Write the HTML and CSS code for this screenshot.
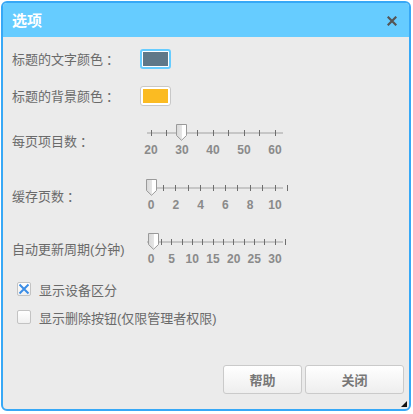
FILE: index.html
```html
<!DOCTYPE html>
<html lang="zh-CN">
<head>
<meta charset="utf-8">
<title>选项</title>
<link rel="stylesheet" href="styles.css">
</head>
<body>
<div class="dialog">
  <div class="header">
    <span class="title">选项</span>
    <span class="close"><svg width="10" height="10" viewBox="0 0 10 10"><path d="M1.5 1.5 L8.5 8.5 M8.5 1.5 L1.5 8.5" stroke="#555" stroke-width="2.2" stroke-linecap="square"/></svg></span>
  </div>
  <div class="content">
    <div class="row row-color r1">
      <span class="label">标题的文字颜色<span class="colon">：</span></span>
      <span class="swatch swatch-focus"><span class="fill fill-slate"></span></span>
    </div>
    <div class="row row-color r2">
      <span class="label">标题的背景颜色<span class="colon">：</span></span>
      <span class="swatch"><span class="fill fill-amber"></span></span>
    </div>

    <div class="row row-slider r3">
      <span class="label">每页项目数<span class="colon">：</span></span>
      <div class="slider">
        <div class="track"></div>
        <i class="tick" style="left:5px"></i><i class="tick" style="left:20.5px"></i><i class="tick" style="left:36px"></i><i class="tick" style="left:51.5px"></i><i class="tick" style="left:67px"></i><i class="tick" style="left:82.5px"></i><i class="tick" style="left:98px"></i><i class="tick" style="left:113.5px"></i><i class="tick" style="left:129px"></i>
        <svg class="thumb" style="left:30px" width="11" height="17" viewBox="0 0 11 17"><defs><linearGradient id="g1" x1="0" x2="1" y1="0" y2="0"><stop offset="0" stop-color="#d9d9d9"/><stop offset="0.55" stop-color="#e6e6e6"/><stop offset="0.6" stop-color="#ffffff"/><stop offset="1" stop-color="#ffffff"/></linearGradient></defs><polygon points="0.5,0.5 10.5,0.5 10.5,11.5 5.5,16.3 0.5,11.5" fill="url(#g1)" stroke="#9a9a9a"/></svg>
        <span class="num" style="left:5px">20</span><span class="num" style="left:36px">30</span><span class="num" style="left:67px">40</span><span class="num" style="left:98px">50</span><span class="num" style="left:129px">60</span>
      </div>
    </div>

    <div class="row row-slider r4">
      <span class="label">缓存页数<span class="colon">：</span></span>
      <div class="slider">
        <div class="track"></div>
        <i class="tick" style="left:5px"></i><i class="tick" style="left:17.4px"></i><i class="tick" style="left:29.8px"></i><i class="tick" style="left:42.2px"></i><i class="tick" style="left:54.6px"></i><i class="tick" style="left:67px"></i><i class="tick" style="left:79.4px"></i><i class="tick" style="left:91.8px"></i><i class="tick" style="left:104.2px"></i><i class="tick" style="left:116.6px"></i><i class="tick" style="left:129px"></i><i class="tick" style="left:141px"></i>
        <svg class="thumb" style="left:0px" width="11" height="17" viewBox="0 0 11 17"><defs><linearGradient id="g2" x1="0" x2="1" y1="0" y2="0"><stop offset="0" stop-color="#d9d9d9"/><stop offset="0.55" stop-color="#e6e6e6"/><stop offset="0.6" stop-color="#ffffff"/><stop offset="1" stop-color="#ffffff"/></linearGradient></defs><polygon points="0.5,0.5 10.5,0.5 10.5,11.5 5.5,16.3 0.5,11.5" fill="url(#g2)" stroke="#9a9a9a"/></svg>
        <span class="num" style="left:5px">0</span><span class="num" style="left:29.8px">2</span><span class="num" style="left:54.6px">4</span><span class="num" style="left:79.4px">6</span><span class="num" style="left:104.2px">8</span><span class="num" style="left:129px">10</span>
      </div>
    </div>

    <div class="row row-slider r5">
      <span class="label">自动更新周期(分钟)</span>
      <div class="slider">
        <div class="track"></div>
        <i class="tick" style="left:5px"></i><i class="tick" style="left:15.3px"></i><i class="tick" style="left:25.7px"></i><i class="tick" style="left:36px"></i><i class="tick" style="left:46.3px"></i><i class="tick" style="left:56.7px"></i><i class="tick" style="left:67px"></i><i class="tick" style="left:77.3px"></i><i class="tick" style="left:87.7px"></i><i class="tick" style="left:98px"></i><i class="tick" style="left:108.3px"></i><i class="tick" style="left:118.7px"></i><i class="tick" style="left:129px"></i><i class="tick" style="left:139px"></i>
        <svg class="thumb" style="left:2px" width="11" height="17" viewBox="0 0 11 17"><defs><linearGradient id="g3" x1="0" x2="1" y1="0" y2="0"><stop offset="0" stop-color="#d9d9d9"/><stop offset="0.55" stop-color="#e6e6e6"/><stop offset="0.6" stop-color="#ffffff"/><stop offset="1" stop-color="#ffffff"/></linearGradient></defs><polygon points="0.5,0.5 10.5,0.5 10.5,11.5 5.5,16.3 0.5,11.5" fill="url(#g3)" stroke="#9a9a9a"/></svg>
        <span class="num" style="left:5px">0</span><span class="num" style="left:25.7px">5</span><span class="num" style="left:46.3px">10</span><span class="num" style="left:67px">15</span><span class="num" style="left:87.7px">20</span><span class="num" style="left:108.3px">25</span><span class="num" style="left:129px">30</span>
      </div>
    </div>

    <label class="check c1">
      <span class="box"><svg width="12" height="12" viewBox="0 0 12 12"><path d="M1.5 1.5 L10.5 10.5 M10.5 1.5 L1.5 10.5" stroke="#3b8de6" stroke-width="2"/></svg></span>
      <span class="check-text">显示设备区分</span>
    </label>
    <label class="check c2">
      <span class="box"></span>
      <span class="check-text">显示删除按钮(仅限管理者权限)</span>
    </label>
  </div>
  <div class="footer">
    <button class="btn btn-help">帮助</button>
    <button class="btn btn-close">关闭</button>
  </div>
  <span class="grip"></span>
</div>
</body>
</html>
```

FILE: styles.css
```css
html, body {
  margin: 0;
  padding: 0;
  background: #ffffff;
}
body {
  padding: 1px;
  font-family: "Liberation Sans", "Noto Sans CJK SC", sans-serif;
  font-size: 13px;
  color: #666;
}
.dialog {
  position: relative;
  width: 410px;
  height: 410px;
  box-sizing: border-box;
  border: 2px solid #37a8f6;
  border-radius: 6px;
  background: #ebebeb;
  overflow: hidden;
  display: flex;
  flex-direction: column;
}
.header {
  height: 34px;
  flex: none;
  background: #66ccff;
  display: flex;
  align-items: center;
  justify-content: space-between;
  padding: 0 12px 0 9px;
}
.title {
  color: #ffffff;
  font-size: 15px;
  font-weight: bold;
  line-height: 20px;
  padding-top: 1px;
}
.close {
  display: flex;
  width: 10px;
  height: 10px;
  margin-top: 2px;
}
.content {
  flex: 1;
  display: flex;
  flex-direction: column;
  padding-left: 9px;
}
.row {
  display: flex;
  align-items: center;
}
.label {
  width: 128px;
  flex: none;
  white-space: nowrap;
  line-height: 18px;
  color: #6a6a6a;
}
.colon {
  font-family: "Noto Sans CJK TC", sans-serif;
  padding-left: 3px;
}
.row-color { height: 24px; }
.r1 { margin-top: 10px; }
.r2 { margin-top: 13px; }
.swatch {
  width: 31px;
  height: 20px;
  box-sizing: border-box;
  border: 1px solid #c8c8c8;
  border-radius: 3px;
  padding: 2px;
  background: #ffffff;
  display: flex;
}
.swatch-focus {
  border: 2px solid #66ccff;
  padding: 1px;
}
.fill { flex: 1; }
.fill-slate { background: #5f7889; }
.fill-amber { background: #fbbb22; }

.row-slider { height: 38px; }
.r3 { margin-top: 14px; }
.r4 { margin-top: 17px; }
.r5 { margin-top: 16px; }
.slider {
  position: relative;
  margin-left: 6px;
  width: 145px;
  height: 38px;
}
.track {
  position: absolute;
  left: 1px;
  top: 10px;
  width: 136px;
  height: 2px;
  background: #c6c6c6;
}
.tick {
  position: absolute;
  top: 8px;
  width: 1px;
  height: 6px;
  margin-left: -0.5px;
  background: #6e6e6e;
}
.thumb {
  position: absolute;
  top: 2px;
  display: block;
}
.num {
  position: absolute;
  top: 22px;
  line-height: 12px;
  font-size: 12px;
  font-weight: bold;
  color: #8a8a8a;
  transform: translateX(-50%);
}

.check {
  display: flex;
  align-items: center;
  height: 20px;
  padding-left: 5px;
}
.c1 { margin-top: 10px; }
.c2 { margin-top: 8px; }
.box {
  width: 14px;
  height: 14px;
  box-sizing: border-box;
  border: 1px solid #c3c3c3;
  border-radius: 2px;
  background: linear-gradient(#ffffff, #f0f0f0);
  display: flex;
  align-items: center;
  justify-content: center;
  margin-right: 8px;
}
.check-text {
  color: #6a6a6a;
  white-space: nowrap;
}

.footer {
  flex: none;
  display: flex;
  justify-content: flex-end;
  gap: 3px;
  padding: 0 5px 15px 0;
}
.btn {
  height: 29px;
  box-sizing: border-box;
  border: 1px solid #cacaca;
  border-radius: 3px;
  background: linear-gradient(#ffffff, #eeeeee);
  font-family: "Liberation Sans", "Noto Sans CJK SC", sans-serif;
  font-size: 13px;
  font-weight: bold;
  color: #777;
  padding: 0;
}
.btn-help { width: 79px; }
.btn-close { width: 99px; }
.grip {
  position: absolute;
  right: 2px;
  bottom: 2px;
  width: 0;
  height: 0;
  border-style: solid;
  border-width: 0 0 6px 6px;
  border-color: transparent transparent #111 transparent;
}
```
